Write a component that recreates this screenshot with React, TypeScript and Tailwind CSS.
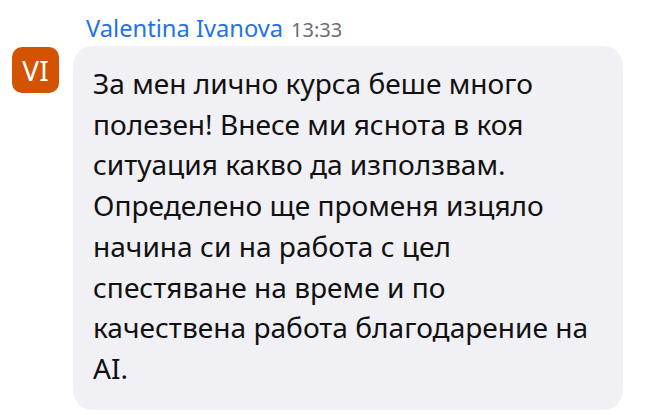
import React from 'react';

const lines = [
  'За мен лично курса беше много',
  'полезен! Внесе ми яснота в коя',
  'ситуация какво да използвам.',
  'Определено ще променя изцяло',
  'начина си на работа с цел',
  'спестяване на време и по',
  'качествена работа благодарение на',
  'AI.',
];

export default function App() {
  return (
    <div className="w-[670px] h-[415px] bg-white overflow-hidden font-['Noto_Sans',sans-serif]">
      {/* header: name + time */}
      <div className="pl-[86px] pt-[11px] h-[46px] flex items-baseline gap-[8px]">
        <span className="text-[23.7px] text-[#1f73ea]">Valentina Ivanova</span>
        <span className="text-[20px] text-[#6c6c7a]">13:33</span>
      </div>

      <div className="flex items-start">
        <div className="ml-[12px] mt-[1px] w-[47px] h-[46px] rounded-[10px] bg-[#d35400] text-white text-[28px] flex items-center justify-center shrink-0">
          VI
        </div>
        <div className="ml-[14px] w-[550px] rounded-[20px] bg-[#f1f0f5] pl-[20px] pr-[16px] pt-[17px] pb-[21px] text-[28.1px] leading-[40.7px] text-[#111111] whitespace-nowrap">
          {lines.map((l, i) => (
            <div key={i}>{l}</div>
          ))}
        </div>
      </div>
    </div>
  );
}
